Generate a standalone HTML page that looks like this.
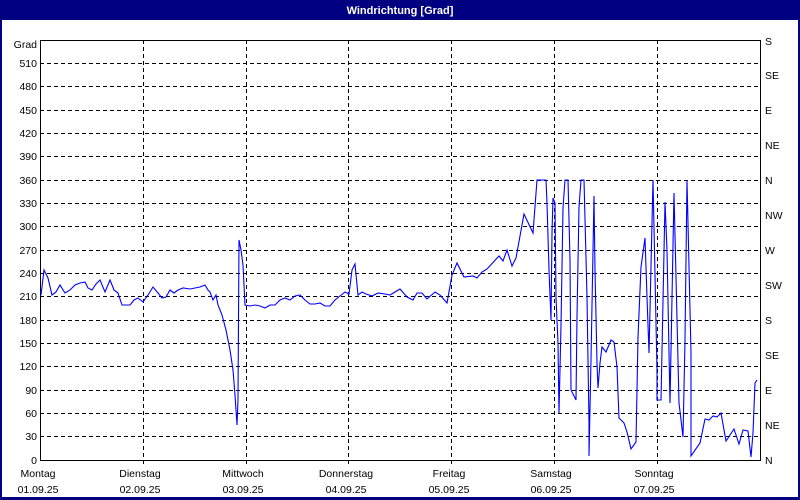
<!DOCTYPE html>
<html><head><meta charset="utf-8"><style>
html,body{margin:0;padding:0;background:#fff;}
body{width:800px;height:500px;position:relative;overflow:hidden;font-family:"Liberation Sans",Tahoma,sans-serif;}
</style></head><body>
<svg width="800" height="500" xmlns="http://www.w3.org/2000/svg" style="position:absolute;left:0;top:0" font-family="Liberation Sans, sans-serif" font-size="10.5">
<rect x="0" y="0" width="800" height="500" fill="#000080"/>
<rect x="2" y="20" width="796" height="477" fill="#fff"/>
<text x="400" y="14" fill="#fff" font-weight="bold" text-anchor="middle" font-size="11">Windrichtung [Grad]</text>
<g stroke="#000" stroke-width="1" stroke-dasharray="4,3" shape-rendering="crispEdges">
<line x1="40" y1="63.5" x2="760" y2="63.5"/><line x1="40" y1="86.5" x2="760" y2="86.5"/><line x1="40" y1="110.5" x2="760" y2="110.5"/><line x1="40" y1="133.5" x2="760" y2="133.5"/><line x1="40" y1="156.5" x2="760" y2="156.5"/><line x1="40" y1="180.5" x2="760" y2="180.5"/><line x1="40" y1="203.5" x2="760" y2="203.5"/><line x1="40" y1="226.5" x2="760" y2="226.5"/><line x1="40" y1="250.5" x2="760" y2="250.5"/><line x1="40" y1="273.5" x2="760" y2="273.5"/><line x1="40" y1="296.5" x2="760" y2="296.5"/><line x1="40" y1="320.5" x2="760" y2="320.5"/><line x1="40" y1="343.5" x2="760" y2="343.5"/><line x1="40" y1="366.5" x2="760" y2="366.5"/><line x1="40" y1="390.5" x2="760" y2="390.5"/><line x1="40" y1="413.5" x2="760" y2="413.5"/><line x1="40" y1="436.5" x2="760" y2="436.5"/>
<line x1="143.5" y1="40" x2="143.5" y2="466"/><line x1="246.5" y1="40" x2="246.5" y2="466"/><line x1="348.5" y1="40" x2="348.5" y2="466"/><line x1="451.5" y1="40" x2="451.5" y2="466"/><line x1="554.5" y1="40" x2="554.5" y2="466"/><line x1="657.5" y1="40" x2="657.5" y2="466"/>
</g>
<rect x="40.5" y="40.5" width="720" height="420" fill="none" stroke="#000" shape-rendering="crispEdges"/>
<g fill="#000" text-anchor="end">
<text x="37" y="48">Grad</text><text x="37" y="67">510</text><text x="37" y="90">480</text><text x="37" y="114">450</text><text x="37" y="137">420</text><text x="37" y="160">390</text><text x="37" y="184">360</text><text x="37" y="207">330</text><text x="37" y="230">300</text><text x="37" y="254">270</text><text x="37" y="277">240</text><text x="37" y="300">210</text><text x="37" y="324">180</text><text x="37" y="347">150</text><text x="37" y="370">120</text><text x="37" y="394">90</text><text x="37" y="417">60</text><text x="37" y="440">30</text><text x="37" y="464">0</text>
</g>
<g fill="#000">
<text x="765" y="45">S</text><text x="765" y="79">SE</text><text x="765" y="114">E</text><text x="765" y="149">NE</text><text x="765" y="184">N</text><text x="765" y="219">NW</text><text x="765" y="254">W</text><text x="765" y="289">SW</text><text x="765" y="324">S</text><text x="765" y="359">SE</text><text x="765" y="394">E</text><text x="765" y="429">NE</text><text x="765" y="464">N</text>
</g>
<g fill="#000" text-anchor="middle">
<text x="38" y="477">Montag</text><text x="38" y="493">01.09.25</text>
<text x="140" y="477">Dienstag</text><text x="140" y="493">02.09.25</text>
<text x="243" y="477">Mittwoch</text><text x="243" y="493">03.09.25</text>
<text x="346" y="477">Donnerstag</text><text x="346" y="493">04.09.25</text>
<text x="449" y="477">Freitag</text><text x="449" y="493">05.09.25</text>
<text x="551" y="477">Samstag</text><text x="551" y="493">06.09.25</text>
<text x="654" y="477">Sonntag</text><text x="654" y="493">07.09.25</text>
</g>
<polyline fill="none" stroke="#0000ff" stroke-width="1.1" points="41,295 44,270 48,278 52,295 56,292 60,285 65,293 70,290 75,285 80,283 85,282 88,288 92,290 96,284 100,280 105,292 110,280 114,290 118,293 122,305 126,305 130,305 134,300 138,298 143,302 148,295 153,287 158,293 162,298 166,297 170,290 174,293 178,290 183,288 190,289 195,288 200,287 205,285 208,290 210,292 213,300 216,295 218,305 222,315 226,330 230,350 233,370 235,395 237,425 238,400 239,240 241,250 243,265 245,305 250,306 255,305 260,306 265,308 270,305 275,305 280,300 285,298 290,300 295,296 300,295 305,300 310,304 315,304 320,303 325,306 330,306 335,300 340,296 345,292 349,294 352,270 355,264 358,295 362,292 366,294 372,296 378,293 385,294 390,295 395,292 400,289 407,297 413,300 417,293 422,293 427,299 435,292 440,295 447,303 452,275 457,263 464,277 473,276 477,278 482,272 487,269 499,256 503,261 507,250 512,266 516,258 524,214 533,233 537,180 546,180 547,203 549,270 551,320 552,233 553,198 555,203 556,297 558,343 559,413 561,325 562,267 563,208 565,180 568,180 570,260 571,390 576,400 577,317 579,207 581,180 584,180 587,297 589,423 589,456 591,360 594,196 595,270 597,363 598,388 600,363 602,347 606,352 611,340 614,342 617,367 619,418 624,423 627,432 631,449 636,442 638,337 641,267 645,238 647,297 649,353 653,180 657,370 657,400 661,400 665,202 667,250 670,403 674,193 679,403 683,437 685,340 687,180 691,353 691,456 700,443 705,419 709,420 713,416 717,417 721,413 726,441 734,429 739,444 743,430 748,431 751,457 753,433 755,383 757,380"/>
</svg>
</body></html>
